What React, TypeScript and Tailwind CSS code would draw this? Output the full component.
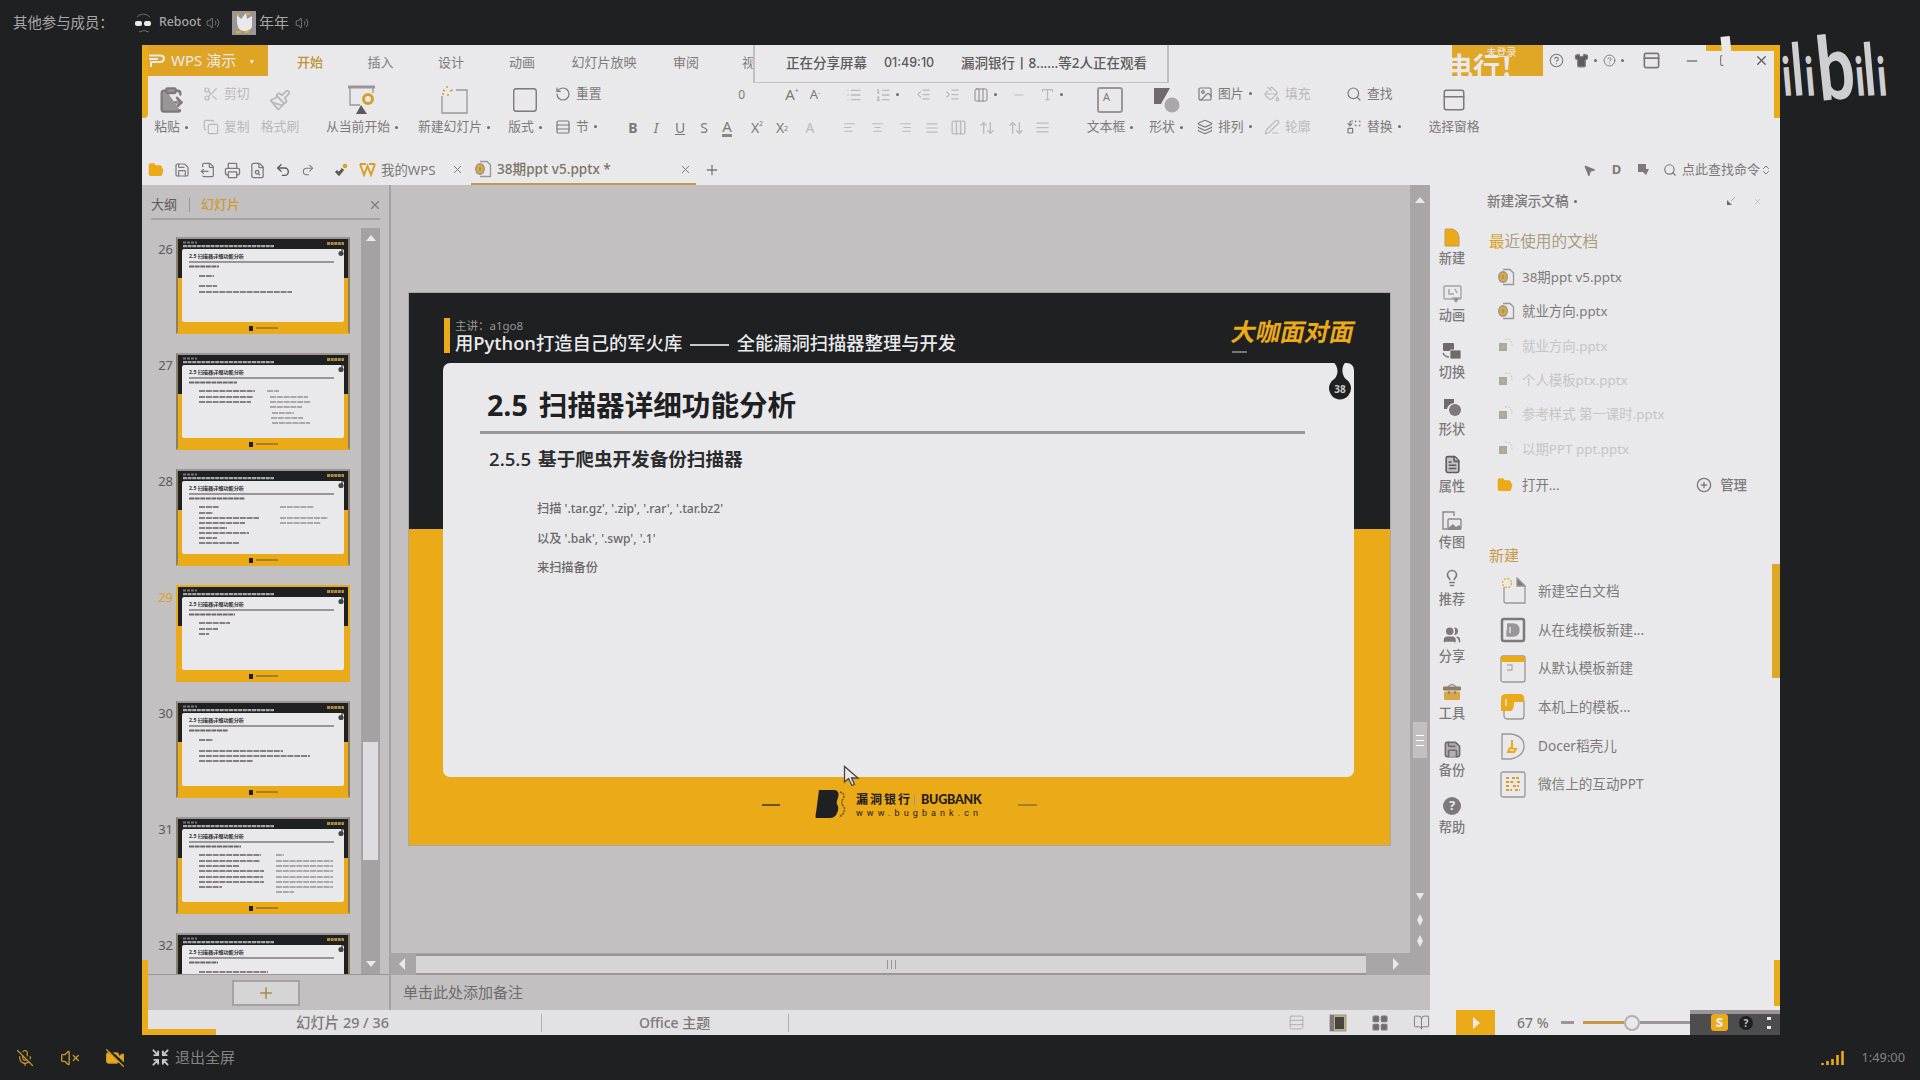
import React from "react";
import {
  ClipboardPaste, Scissors, Copy, Paintbrush, Square, RotateCcw, Rows3, List, ListOrdered,
  IndentDecrease, IndentIncrease, AlignLeft, AlignCenter, AlignRight, AlignJustify, Columns3, ArrowUpDown, Type,
  Image as ImageIcon, PaintBucket, Search, Layers, Replace, PanelTop, FolderOpen, Save, FileOutput, Printer,
  FileSearch, Undo2, Redo2, X, Plus, Minus, Shirt, HelpCircle, Square as Restore, Copy as Trans,
  FileText, Lightbulb, Users, LayoutGrid, ChevronsUpDown, MicOff, VolumeX, VideoOff,
  Volume2, Shrink, BookOpen, MousePointer2, Save as Backup, PenLine, CirclePlus,
} from "lucide-react";

const Ico = ({ i: I, s = 16, c = "" }: { i: any; s?: number; c?: string }) => (
  <I size={s} strokeWidth={1.8} className={"shrink-0 " + c} />
);

const Dot = () => <span className="ml-[5px] inline-block h-[3px] w-[3px] shrink-0 rounded-full bg-[#6f6b6c]" />;

function Big({ icon, label, className, dot = true, faint = false }: { icon: React.ReactNode; label: string; className: string; dot?: boolean; faint?: boolean }) {
  return (
    <div className={"flex shrink-0 flex-col items-center " + className + (faint ? " text-[#bab8b9]" : "")}>
      <div className="flex h-[42px] items-center pt-[6px]">{icon}</div>
      <div className="flex h-[18px] items-center whitespace-nowrap">
        {label}
        {dot && <Dot />}
      </div>
    </div>
  );
}

function Pair({ rows, className }: { rows: { icon: any; label: string; dot?: boolean; faint?: boolean }[]; className: string }) {
  return (
    <div className={"flex shrink-0 flex-col pt-px " + className}>
      {rows.map((r, k) => (
        <div key={k} className={"flex h-[33px] items-center gap-[5px] whitespace-nowrap " + (r.faint ? "text-[#bab8b9]" : "")}>
          <Ico i={r.icon} s={16} />
          <span className="flex items-center">{r.label}{r.dot && <Dot />}</span>
        </div>
      ))}
    </div>
  );
}

const Slot = ({ w, children, faint }: { w: string; children?: React.ReactNode; faint?: boolean }) => (
  <span className={"flex shrink-0 items-center justify-center " + w + (faint ? " text-[#bcbabb]" : "")}>{children}</span>
);

function BottomBrand({ small }: { small?: boolean }) {
  if (small)
    return (
      <div className="flex h-[12px] items-center justify-center gap-[3px]">
        <span className="h-[5px] w-[4px] bg-[#1e2022]" />
        <span className="h-[2px] w-[22px] bg-[#a97f26]" />
      </div>
    );
  return (
    <div className="flex h-[67px] items-start pl-[353px] pt-[12px] text-[#1e2022]">
      <span className="mt-[15px] h-[2px] w-[18px] bg-[#6b5320]" />
      <svg width="32" height="30" viewBox="0 0 32 30" className="ml-[35px]">
        <path d="M4 1 H20 Q25 2 23 9 Q21 13 22 15 Q25 20 21 26 Q19 29 15 29 H1 Q0 28 1 24Z" fill="#1e2022" />
        <path d="M25 3 Q31 5 28 10 Q25 14 29 18 Q31 24 24 28" fill="none" stroke="#6b5320" strokeWidth="1.5" strokeDasharray="2 1" />
      </svg>
      <div className="ml-[9px] mt-[3px] w-[126px]">
        <div className="flex h-[15px] items-center whitespace-nowrap text-[12px] font-bold leading-[15px]">
          <span className="tracking-[2px]">漏洞银行</span>
          <span className="ml-[2px] h-[10px] w-px bg-[#9a9697]" />
          <span className="ml-[6px] font-[Lato] text-[12.5px] font-black tracking-[-0.2px]">BUGBANK</span>
        </div>
        <div className="mt-[1px] whitespace-nowrap font-[Roboto] text-[9px] leading-[10px] tracking-[4.1px]">www.bugbank.cn</div>
      </div>
      <span className="ml-[36px] mt-[15px] h-[2px] w-[19px] bg-[#a97f26]" />
    </div>
  );
}

type Line = [number, number, number];
const thumbs: { n: number; sub: number; lines: Line[] }[] = [
  { n: 26, sub: 30, lines: [[16, 23, 15], [16, 33, 18], [16, 39, 93]] },
  { n: 27, sub: 48, lines: [[16, 22, 56], [16, 28, 54], [16, 33, 52], [84, 22, 12], [87, 28, 38], [87, 33, 41], [87, 38, 32], [89, 44, 22], [88, 49, 32], [89, 54, 38]] },
  { n: 28, sub: 56, lines: [[16, 22, 20], [16, 28, 14], [16, 33, 60], [16, 38, 46], [16, 43, 28], [16, 48, 50], [16, 53, 18], [16, 58, 40], [97, 22, 34], [97, 33, 48], [97, 38, 41]] },
  { n: 29, sub: 46, lines: [[16, 22, 31], [16, 28, 19], [16, 33, 10]] },
  { n: 30, sub: 39, lines: [[16, 23, 14], [16, 34, 84], [16, 39, 111], [16, 44, 54]] },
  { n: 31, sub: 52, lines: [[16, 22, 62], [16, 28, 61], [16, 33, 40], [16, 38, 65], [16, 44, 64], [16, 49, 65], [16, 54, 23], [93, 22, 8], [93, 28, 57], [93, 33, 57], [93, 38, 57], [93, 44, 57], [93, 49, 57], [93, 54, 57], [93, 59, 18]] },
  { n: 32, sub: 29, lines: [[16, 23, 69]] },
];

function Thumb({ n, sub, lines }: { n: number; sub: number; lines: Line[] }) {
  const on = n === 29;
  return (
    <div className="flex h-[116px] shrink-0">
      <span className={"mt-[3px] w-[33px] shrink-0 pr-[2px] text-right text-[13px] leading-[18px] " + (on ? "text-[#d9a029]" : "text-[#5d5a5b]")}>{n}</span>
      <div className={"ml-px h-[97px] w-[174px] shrink-0 border-2 " + (on ? "border-[#ebaa17]" : "border-t-[#9a9697] border-x-[#8d7f66] border-b-[#ebaa17]")}>
        <div className="h-full bg-linear-to-b from-[#1e2022] from-[42%] to-[#ebaa17] to-[42%] px-[4px]">
          <svg width="162" height="10" viewBox="0 0 162 10" className="block">
            <path d="M1 3.500H15" stroke="#77757a" strokeWidth="2" strokeDasharray="3 1" />
            <path d="M1 7.200H92" stroke="#a9a7a8" strokeWidth="2.200" strokeDasharray="4 .6" />
            <path d="M145 4.500H162" stroke="#b08c3c" strokeWidth="3" strokeDasharray="3 .6" />
          </svg>
          <div className="h-[73px] rounded-[2px] bg-[#e9e9eb]">
            <svg width="162" height="73" viewBox="0 0 162 73">
              <text x="7" y="9.300" fontSize="5" fontWeight="700" fill="#2b2c2e" textLength="55" lengthAdjust="spacingAndGlyphs">2.5 扫描器详细功能分析</text>
              <path d="M7 13H152" strokeWidth="1.800" stroke="#9a9697" />
              <g stroke="#9a9697">
                <path d={`M7 17.5h${sub}`} stroke="#6d696a" strokeWidth="2.2" strokeDasharray="5 .6" />
                {lines.map(([x, y, w], k) => (
                  <path key={k} d={`M${x + 1} ${y + 4}h${w}`} stroke={x > 80 ? "#aaa7a8" : "#858182"} strokeWidth="2" strokeDasharray="6 .8" />
                ))}
              </g>
              <path d="M160 0v4" stroke="#1e2022" />
              <circle cx="159" cy="4.5" r="2.6" fill="#454546" />
            </svg>
          </div>
          <BottomBrand small />
        </div>
      </div>
    </div>
  );
}

function Slide() {
  return (
    <div className="ml-[18px] mt-[108px] h-[552px] w-[981px] bg-linear-to-b from-[#1e2022] from-[42.8%] to-[#ebaa17] to-[42.8%] outline outline-[#9a9697]/60">
      <div className="flex h-[70px] pl-[35px] pr-[36px] pt-[25px]">
        <div className="h-[35px] w-[6px] bg-[#ebaa17]" />
        <div className="ml-[5px] whitespace-nowrap">
          <div className="h-[14px] text-[11.5px] leading-[15px] text-[#9a9697]">主讲：a1go8</div>
          <div className="font-['Open_Sans','Noto_Sans_CJK_SC',sans-serif] text-[18.3px] font-medium leading-[22px] text-[#e9e9eb]">
            用<span className="font-semibold">Python</span>打造自己的军火库 <span className="mx-[3px] inline-block h-[2px] w-[39px] align-middle bg-[#c8c7c8]" /> 全能漏洞扫描器整理与开发
          </div>
        </div>
        <div className="ml-auto">
          <div className="-skew-x-12 whitespace-nowrap text-[24.5px] font-bold leading-[28px] text-[#ebaa17]">大咖面对面</div>
          <div className="mt-[5px] h-[2px] w-[15px] bg-[#77757a]" />
        </div>
      </div>
      <div className="relative ml-[34px] h-[414px] w-[911px] rounded-[7px] bg-[#e9e9eb]">
        <svg className="absolute right-[2px] top-[-1px]" width="24" height="40" viewBox="0 0 24 40">
          <path d="M5 0H18Q14 3 14.500 10Q15 15 19 18A11 11 0 1 1 5 18Q9 15 9.500 10Q9.500 3 5 0Z" fill="#1e2022" />
          <text x="12" y="31" textAnchor="middle" fontSize="10" fontFamily="Open Sans" fontWeight="700" fill="#c8c7c8">38</text>
        </svg>
        <h1 className="whitespace-nowrap pl-[44px] pt-[21px] font-['Open_Sans','Noto_Sans_CJK_SC',sans-serif] text-[28.6px] font-bold leading-[42px] text-[#1e2022]">2.5<span className="ml-[11px]">扫描器详细功能分析</span></h1>
        <div className="ml-[37px] mt-[5px] h-[3px] w-[825px] bg-[#9a9697]" />
        <h2 className="whitespace-nowrap pl-[46px] pt-[12px] font-['Open_Sans','Noto_Sans_CJK_SC',sans-serif] text-[18.6px] font-semibold leading-[26px] text-[#2b2c2e]">2.5.5<span className="ml-[7px]">基于爬虫开发备份扫描器</span></h2>
        <div className="pl-[94px] pt-[22px] text-[12.2px] leading-[29.6px] text-[#6a6768]">
          <div className="font-medium">扫描 <span className="text-[12.100px]">'.tar.gz', '.zip', '.rar', '.tar.bz2'</span></div>
          <div className="font-medium">以及 <span className="text-[12.100px]">'.bak', '.swp', '.1'</span></div>
          <div className="font-medium">来扫描备份</div>
        </div>
        <svg className="absolute left-[400px] top-[402px]" width="18" height="24" viewBox="0 0 18 24">
          <path d="M1.500 1.500V17L5.500 13.500L9 20.500L11.500 19.500L8.500 13H15Z" fill="#e9e9eb" stroke="#454546" strokeWidth="1.3" />
        </svg>
      </div>
      <BottomBrand />
    </div>
  );
}

const NewDoc = () => (
  <svg width="16" height="19" viewBox="0 0 16 19"><path d="M1 2Q1 1 2 1H8Q15 3 15 10V18H1Z" fill="#ebaa17" stroke="#c09a50" /></svg>
);
const Animate = () => (
  <svg width="19" height="18" viewBox="0 0 19 18" fill="none" stroke="#a5a2a3" strokeWidth="1.400"><rect x="1" y="1" width="17" height="13" rx="1" /><path d="M6 4v5h5M12 4l2 4" /><path d="M10 13h6l-3 4z" fill="#7d797a" /></svg>
);
const Switch = () => (
  <svg width="20" height="18" viewBox="0 0 20 18"><rect x="1" y="1" width="11" height="8" rx="1" fill="#6f6b6c" /><rect x="8" y="8" width="11" height="9" rx="1" fill="#6f6b6c" stroke="#e9e9eb" strokeWidth=".8" /><path d="M1 11q2 4 6 4" fill="none" stroke="#7d797a" strokeWidth="1.500" /></svg>
);
const Shape = () => (
  <svg width="19" height="19" viewBox="0 0 19 19"><path d="M1 1h10v4Q5 6 4 11H1z" fill="#6f6b6c" /><circle cx="12" cy="12" r="6" fill="#7d797a" /></svg>
);
const Tools = () => (
  <svg width="20" height="18" viewBox="0 0 20 18"><path d="M6 4Q10 -1 14 4" fill="none" stroke="#9a9697" strokeWidth="1.500" /><rect x="1" y="3.500" width="18" height="4" rx="1" fill="#8d7f66" /><rect x="2" y="8.500" width="16" height="8.500" rx="1" fill="#d9a845" /><path d="M7 8v3m6-3v3" stroke="#7d797a" strokeWidth="1.500" /></svg>
);
const Send = () => (
  <svg width="20" height="20" viewBox="0 0 20 20" fill="none" stroke="#8d898a" strokeWidth="1.400"><path d="M12 5V1H1V18H6" /><rect x="6" y="8" width="13" height="10" rx="1" /><path d="M6 17l5-4 3 3 3-2 2 2v3H6z" fill="#8d898a" stroke="none" /></svg>
);
const Person = () => <Users size={18} fill="#7d797a" strokeWidth={2} />;
const Help = () => (
  <span className="flex h-[18px] w-[18px] items-center justify-center rounded-full bg-[#7d797a] text-[13px] font-bold leading-none text-[#e9e9eb]">?</span>
);
const Prop = () => <FileText size={19} fill="#c2c0c1" className="text-[#5d5a5b]" />;
const Idea = () => <Lightbulb size={18} strokeWidth={2.2} />;
const Back = () => <Backup size={19} fill="#b2afb0" className="text-[#6f6b6c]" />;

const tools: [React.FC, string][] = [
  [NewDoc, "新建"], [Animate, "动画"], [Switch, "切换"], [Shape, "形状"], [Prop, "属性"], [Send, "传图"],
  [Idea, "推荐"], [Person, "分享"], [Tools, "工具"], [Back, "备份"], [Help, "帮助"],
];

const PptIcon = ({ dim }: { dim?: boolean }) => (
  <svg width="18" height="18" viewBox="0 0 18 18" className="shrink-0">
    {dim ? (
      <><path d="M8 2h4l3 4v3" fill="none" stroke="#c2c0c1" strokeDasharray="2 1.500" /><rect x="2" y="6" width="8" height="8" fill="#aaa7a8" /><circle cx="6" cy="10" r="1.800" fill="#c9ae73" /></>
    ) : (
      <><path d="M6 1.500h7l3.500 3.500v11.500H6" fill="none" stroke="#9a9697" strokeWidth="1.3" /><ellipse cx="6" cy="9" rx="5" ry="6" fill="#9a9697" /><ellipse cx="6" cy="9" rx="2.500" ry="3.300" fill="none" stroke="#ebaa17" strokeWidth="2" /></>
    )}
  </svg>
);

const recents: [string, boolean][] = [
  ["38期ppt v5.pptx", false], ["就业方向.pptx", false], ["就业方向.pptx", true],
  ["个人模板ptx.pptx", true], ["参考样式 第一课时.pptx", true], ["以期PPT ppt.pptx", true],
];

const TemplateIcon = ({ k }: { k: number }) => (
  <svg width="26" height="28" viewBox="0 0 26 28" className="shrink-0" fill="none" stroke="#9a9697" strokeWidth="1.3">
    {k === 0 && <><path d="M4 10V24q0 2 2 2H25V9L18 2" /><path d="M17 1v8h8z" fill="#7d797a" /><circle cx="7" cy="6" r="4.500" stroke="#ebaa17" strokeDasharray="2 1.500" /></>}
    {k === 1 && <><rect x="2" y="3" width="22" height="22" rx="2" strokeWidth="2.500" stroke="#7d797a" /><path d="M7 8h6q6 0 6 6t-6 6H7v-6" fill="#9a9697" /><path d="M10 11v6" stroke="#e9e9eb" /></>}
    {k === 2 && <><rect x="1" y="1" width="24" height="26" rx="2" /><path d="M1 7V2.500Q1 1 2.500 1H23.500Q25 1 25 2.500V7Z" fill="#ebaa17" stroke="none" /><path d="M7 10h5v5H7" opacity=".7" /></>}
    {k === 3 && <><rect x="4" y="6" width="20" height="20" rx="3" /><path d="M1 18V6q0-5 5-5h14q4 0 4 4v4H14q0 8-3 9z" fill="#ebaa17" stroke="none" /><path d="M6 6v7" stroke="#e9e9eb" /></>}
    {k === 4 && <><path d="M2 2h9q13 2 13 12T11 27H2Z" /><path d="M12 8v9M10 16l-2 4h6l2-3z" stroke="#ebaa17" strokeWidth="2" /></>}
    {k === 5 && <><rect x="1" y="1" width="24" height="25" rx="2" /><path d="M6 7h3m3 0h7M6 11h8m3 0h3M6 15h4m3 0h6M6 19h6m3 0h5" stroke="#d9a029" strokeWidth="2.200" strokeDasharray="3 1.200" /></>}
  </svg>
);

const templates = ["新建空白文档", "从在线模板新建...", "从默认模板新建", "本机上的模板...", "Docer稻壳儿", "微信上的互动PPT"];

const Tri = ({ d }: { d: string }) => (
  <svg width="12" height="12" viewBox="0 0 12 12" className="shrink-0"><path d={d} fill="#e9e9eb" /></svg>
);

const Gripper = () => (
  <>
    <i className="h-[9px] w-px bg-[#9a9697]" />
    <i className="h-[9px] w-px bg-[#9a9697]" />
    <i className="h-[9px] w-px bg-[#9a9697]" />
  </>
);

export default function App() {
  return (
    <div className="relative flex h-[1080px] w-[1920px] flex-col overflow-hidden bg-[#1e2022] font-['Noto_Sans','Noto_Sans_CJK_SC',sans-serif] text-[13px] text-[#7d797a]">
      {/* participants */}
      <header className="flex h-[45px] shrink-0 items-center whitespace-nowrap pl-[13px] text-[14.4px] text-[#a9a6a7]">
        <span className="w-[122px]">其他参与成员：</span>
        <svg width="17" height="22" viewBox="0 0 17 22">
          <path d="M2 5Q8 -1 15 5M4 20Q9 17 14 20" stroke="#6f6d6e" fill="none" />
          <rect x="0" y="9" width="7" height="5" rx="2" fill="#e9e9eb" /><rect x="9" y="9" width="7" height="5" rx="2" fill="#e9e9eb" />
        </svg>
        <span className="ml-[7px] w-[47px] text-[12.3px] font-medium">Reboot</span>
        <Ico i={Volume2} s={14} c="text-[#6f6d6e]" />
        <span className="ml-[12px] flex h-[24px] w-[24px] items-center justify-center bg-[#9a9697]">
          <svg width="22" height="22" viewBox="0 0 22 22"><path d="M4 3l4 4 5-6 1 6 5-3v11q-2 4-8 4t-7-8z" fill="#e9e9eb" /><path d="M4 3h2M14 2h3M3 20h5m3 0h5" stroke="#ebaa17" strokeWidth="2" /></svg>
        </span>
        <span className="ml-[3px] w-[36px] text-[15px]">年年</span>
        <Ico i={Volume2} s={14} c="text-[#6f6d6e]" />
      </header>

      {/* shared window */}
      <main className="relative ml-[142px] flex h-[990px] w-[1638px] shrink-0 flex-col bg-[#e9e9eb]">
        <div className="flex h-[31px] shrink-0 whitespace-nowrap">
          <div className="flex w-[126px] items-center bg-[#dfa424] pl-[7px] text-[#e9e9eb]">
            <svg width="16" height="14" viewBox="0 0 16 14"><path d="M0 1.500H12Q15 2 15 4.500T12 8H2V13M0 5H9" stroke="#e9e9eb" strokeWidth="2" fill="none" /></svg>
            <span className="ml-[6px] text-[15px]">WPS 演示</span>
            <span className="ml-[14px] text-[8px]">▾</span>
          </div>
          <div className="flex items-center pt-[5px]">
            <span className="w-[84px] text-center font-medium text-[#c09130]">开始</span>
            <span className="w-[57px] text-center">插入</span>
            <span className="w-[84px] text-center">设计</span>
            <span className="w-[58px] text-center">动画</span>
            <span className="w-[106px] text-center">幻灯片放映</span>
            <span className="w-[58px] text-center">审阅</span>
            <span className="w-[38px] pl-[27px]">视</span>
          </div>
          <div className="relative z-10 flex h-[38px] w-[416px] items-center border-x-2 border-b border-[#c2c0c1] bg-[#e9e9eb] pl-[31px] text-[13.5px] font-medium text-[#5d5a5b]">
            <span className="w-[98px]">正在分享屏幕</span>
            <span className="w-[77px] font-[Inter] text-[12.5px]">01:49:10</span>
            <span>漏洞银行丨8......等2人正在观看</span>
          </div>
          <div className="ml-[283px] flex w-[91px] items-start justify-center bg-[#e0a626] pl-[8px] pt-px text-[10px] leading-[12px] text-[#e9e9eb]">未登录</div>
          <div className="flex items-center">
            <Slot w="w-[27px]"><Ico i={HelpCircle} s={15} /></Slot>
            <Slot w="w-[30px]"><Shirt size={15} fill="#5d5a5b" /><Dot /></Slot>
            <Slot w="w-[26px]"><Ico i={HelpCircle} s={13} /><Dot /></Slot>
            <Slot w="w-[50px]"><PanelTop size={19} strokeWidth={2.2} /></Slot>
            <Slot w="w-[32px]"><Minus size={16} /></Slot>
            <Slot w="w-[34px]"><Restore size={13} /></Slot>
            <Slot w="w-[38px]"><X size={15} className="text-[#5d5a5b]" /></Slot>
          </div>
        </div>

        {/* ribbon */}
        <div className="flex h-[79px] shrink-0 overflow-hidden text-[12.8px]">
          <Big className="ml-[9px] w-[40px]" icon={<ClipboardPaste size={28} fill="#9a9697" />} label="粘贴" />
          <Pair className="ml-[12px] w-[52px]" rows={[{ icon: Scissors, label: "剪切", faint: true }, { icon: Copy, label: "复制", faint: true }]} />
          <Big className="ml-[5px] w-[40px]" faint dot={false} icon={<Paintbrush size={22} />} label="格式刷" />
          <Big
            className="ml-[23px] w-[78px]"
            icon={
              <svg width="28" height="30" viewBox="0 0 28 30"><path d="M0 2H27" stroke="#9a9697" strokeWidth="3" /><path d="M2 3V20H12M25 3V8" fill="none" stroke="#9a9697" strokeWidth="1.300" /><circle cx="20" cy="14" r="4.500" fill="none" stroke="#d9a029" strokeWidth="3" /><path d="M13 20L19 29H8Z" fill="#5d5a5b" /></svg>
            }
            label="从当前开始"
          />
          <Big
            className="ml-[13px] w-[80px]"
            icon={
              <svg width="28" height="30" viewBox="0 0 28 30" fill="none"><path d="M2 11V28H27V5H16" stroke="#9a9697" strokeWidth="1.300" /><path d="M7 1v2M3 5l2 1M10 6l3-1M8 9v2M2 9h2" stroke="#d9a029" strokeWidth="1.500" /></svg>
            }
            label="新建幻灯片"
          />
          <Big className="ml-[10px] w-[42px]" icon={<Square size={30} strokeWidth={1.1} />} label="版式" />
          <Pair className="ml-[9px] w-[60px]" rows={[{ icon: RotateCcw, label: "重置" }, { icon: Rows3, label: "节", dot: true }]} />
          <div className="flex flex-col text-[15px]">
            <div className="flex h-[37px] items-center">
              <Slot w="w-[130px]"><span className="ml-auto text-[12px]">0</span></Slot>
              <Slot w="ml-[35px] w-[24px]">A<sup className="text-[7px]">+</sup></Slot>
              <Slot w="w-[22px]"><span className="text-[13px]">A<sup className="text-[7px]">-</sup></span></Slot>
              <Slot w="ml-[14px] w-[28px]" faint><List size={16} /></Slot>
              <Slot w="w-[38px]" faint><ListOrdered size={16} /><Dot /></Slot>
              <Slot w="w-[35px]" faint><IndentDecrease size={15} /></Slot>
              <Slot w="w-[22px]" faint><IndentIncrease size={15} /></Slot>
              <Slot w="w-[44px]"><Columns3 size={16} strokeWidth={1.3} /><Dot /></Slot>
              <Slot w="w-[24px]" faint><Minus size={14} /></Slot>
              <Slot w="w-[40px]" faint><Type size={15} /><Dot /></Slot>
            </div>
            <div className="flex h-[29px] items-center text-[14px]">
              <Slot w="w-[36px]"><b>B</b></Slot>
              <Slot w="w-[10px]"><i>I</i></Slot>
              <Slot w="ml-[7px] w-[24px]"><u>U</u></Slot>
              <Slot w="w-[24px]">S</Slot>
              <Slot w="w-[22px]"><span className="border-b-[3px] border-[#8a8687] text-[15px] leading-[15px]">A</span></Slot>
              <Slot w="ml-[7px] w-[24px]">X<sup className="text-[7px]">2</sup></Slot>
              <Slot w="w-[26px]">X<sub className="text-[7px]">2</sub></Slot>
              <Slot w="w-[30px]" faint>A</Slot>
              <Slot w="ml-[10px] w-[28px]" faint><AlignLeft size={13} /></Slot>
              <Slot w="w-[28px]" faint><AlignCenter size={13} /></Slot>
              <Slot w="w-[28px]" faint><AlignRight size={13} /></Slot>
              <Slot w="w-[26px]" faint><AlignJustify size={14} /></Slot>
              <Slot w="w-[26px]" faint><Columns3 size={17} /></Slot>
              <Slot w="w-[32px]" faint><ArrowUpDown size={16} /></Slot>
              <Slot w="w-[26px]" faint><ArrowUpDown size={16} /></Slot>
              <Slot w="w-[26px]" faint><AlignJustify size={15} /></Slot>
            </div>
          </div>
          <div className="flex grow pl-[7px]">
            <Big className="w-[64px]" icon={<div className="flex h-[26px] w-[26px] items-start rounded-[3px] border-2 border-[#9a9697] pl-[4px] text-[11px] leading-[16px]">A</div>} label="文本框" />
            <Big className="ml-[2px] w-[44px]" icon={<svg width="27" height="27" viewBox="0 0 27 27"><path d="M1 1h16L8 17H1z" fill="#6f6b6c" /><circle cx="19" cy="18" r="7.500" fill="#aaa7a8" /></svg>} label="形状" />
            <Pair className="ml-[9px] w-[67px]" rows={[{ icon: ImageIcon, label: "图片", dot: true }, { icon: Layers, label: "排列", dot: true }]} />
            <Pair className="w-[82px]" rows={[{ icon: PaintBucket, label: "填充", faint: true }, { icon: PenLine, label: "轮廓", faint: true }]} />
            <Pair className="w-[71px]" rows={[{ icon: Search, label: "查找" }, { icon: Replace, label: "替换", dot: true }]} />
            <Big className="ml-[5px] w-[64px]" dot={false} icon={<PanelTop size={26} strokeWidth={1.4} />} label="选择窗格" />
          </div>
        </div>

        {/* quick access and document tabs */}
        <div className="flex h-[30px] shrink-0 items-center whitespace-nowrap">
          <Slot w="w-[27px]"><FolderOpen size={16} fill="#ebaa17" className="text-[#ebaa17]" /></Slot>
          <Slot w="w-[26px]"><Ico i={Save} /></Slot>
          <Slot w="w-[25px]"><Ico i={FileOutput} /></Slot>
          <Slot w="w-[25px]"><Ico i={Printer} s={17} /></Slot>
          <Slot w="w-[25px]"><Ico i={FileSearch} s={17} /></Slot>
          <Slot w="w-[25px]"><Undo2 size={16} className="text-[#5d5a5b]" /></Slot>
          <Slot w="w-[25px]"><Ico i={Redo2} s={14} /></Slot>
          <Slot w="w-[36px]">
            <svg width="14" height="14" viewBox="0 0 14 14" className="ml-[6px]"><path d="M2 8l3 3 4-5" fill="none" stroke="#5d5a5b" strokeWidth="3" /><circle cx="11" cy="3" r="2.300" fill="#d9a029" /></svg>
          </Slot>
          <span className="ml-[3px] flex items-center text-[13.4px]">
            <svg width="17" height="14" viewBox="0 0 17 14"><path d="M1 1L5 12L8.500 3L12 12L16 1M1 1H7M10 1h6" fill="none" stroke="#d9a029" strokeWidth="2" /></svg>
            <span className="ml-[5px] w-[70px]">我的WPS</span>
            <Ico i={X} s={13} />
          </span>
          <span className="ml-[7px] flex h-[30px] w-[225px] items-center border-b-2 border-[#c09a50] pl-[3px] text-[13.6px] font-medium">
            <PptIcon />
            <span className="ml-[5px] w-[182px] text-[#7b7368]">38期ppt v5.pptx *</span>
            <Ico i={X} s={13} />
          </span>
          <Plus size={16} className="ml-[8px]" />
          <span className="ml-auto flex items-center gap-[13px] pr-[8px]">
            <MousePointer2 size={13} fill="#7d797a" />
            <span className="w-[15px] text-center font-bold">D</span>
            <svg width="13" height="14" viewBox="0 0 13 14"><path d="M1 1h8v5h3l-3 6-3-3H1z" fill="#7d797a" /></svg>
            <span className="flex items-center gap-[5px]"><Search size={14} />点此查找命令<ChevronsUpDown size={12} className="-ml-[5px]" /></span>
          </span>
        </div>

        <div className="flex h-[850px] shrink-0">
          <div className="flex w-[1288px] shrink-0 flex-col">
            <div className="flex h-[825px] bg-[#c2c0c1]">
              {/* slide list */}
              <section className="flex w-[249px] shrink-0 flex-col border-r-2 border-[#a5a2a3]">
                <div className="mx-[9px] flex h-[35px] shrink-0 items-center border-b-2 border-[#a5a2a3] pt-[6px]">
                  <span className="w-[38px] text-[#5d5a5b]">大纲</span>
                  <span className="h-[14px] w-px bg-[#9a9697]" />
                  <span className="ml-[11px] font-medium text-[#cf9a30]">幻灯片</span>
                  <X size={14} className="ml-auto mr-[-2px]" />
                </div>
                <div className="flex h-[755px] border-b border-[#9a9697]">
                  <div className="h-full w-[219px] overflow-hidden pt-[17px]">
                    {thumbs.map((t) => <Thumb key={t.n} {...t} />)}
                  </div>
                  <div className="mt-[8px] flex w-[19px] flex-col items-center bg-[#a5a2a3] py-[4px]">
                    <Tri d="M1 9L6 3L11 9Z" />
                    <span className="mt-[498px] h-[118px] w-[15px] shrink-0 bg-[#dddcde]" />
                    <span className="grow" />
                    <Tri d="M1 3L6 9L11 3Z" />
                  </div>
                </div>
                <div className="flex h-[35px] items-center pl-[90px]">
                  <span className="flex h-[26px] w-[68px] items-center justify-center border-2 border-[#a5a2a3] bg-[#d6d5d6]"><Plus size={18} className="text-[#a98a48]" /></span>
                </div>
              </section>

              {/* canvas */}
              <section className="flex w-[1039px] flex-col">
                <div className="flex h-[768px]">
                  <div className="w-[1019px]"><Slide /></div>
                  <div className="flex w-[20px] flex-col items-center bg-[#a9a6a7] pt-[8px]">
                    <Tri d="M1 10L6 4L11 10Z" />
                    <span className="mt-[517px] flex h-[36px] w-[14px] flex-col justify-center gap-[4px] bg-[#c2c0c1] px-[3px]"><i className="h-px bg-white" /><i className="h-px bg-white" /><i className="h-px bg-white" /></span>
                    <span className="grow" />
                    <Tri d="M2 2L6 9L10 2Z" />
                    <span className="mt-[11px] flex"><Tri d="M6 0L9 6L6 12L3 6Z" /></span>
                    <span className="mb-[6px] mt-[9px] flex"><Tri d="M6 0L9 6L6 12L3 6Z" /></span>
                  </div>
                </div>
                <div className="flex h-[22px] items-center bg-[#a9a6a7] pl-[5px]">
                  <Tri d="M9 0L3 6L9 12Z" />
                  <span className="ml-[8px] flex h-[21px] w-[950px] items-center justify-center gap-[3px] border-y-2 border-[#9a9697] bg-[#d6d5d6]"><Gripper /></span>
                  <span className="ml-[24px] flex"><Tri d="M3 0L9 6L3 12Z" /></span>
                </div>
                <div className="flex h-[35px] items-center pl-[12px] text-[15px] text-[#6f6b6c]">单击此处添加备注</div>
              </section>
            </div>
            {/* status bar */}
            <div className="flex h-[25px] items-center whitespace-nowrap bg-[#e2e1e3] text-[14px] font-medium">
              <span className="w-[399px] pl-[154px] text-[14.4px]">幻灯片 29 / 36</span>
              <span className="h-[18px] w-px bg-[#b2afb0]" />
              <span className="w-[246px] pl-[97px]">Office 主题</span>
              <span className="h-[18px] w-px bg-[#b2afb0]" />
              <span className="ml-auto flex items-center gap-[24px] pl-[2px]">
                <Rows3 size={17} strokeWidth={1.2} className="text-[#aaa7a8]" />
                <svg width="18" height="18" viewBox="0 0 18 18"><rect x="1" y="1" width="16" height="16" fill="#c9ae73" stroke="#9a9697" /><rect x="1" y="1" width="4" height="16" fill="#7d797a" /><rect x="6" y="3" width="9" height="12" fill="#454546" /></svg>
                <LayoutGrid size={18} fill="#6f6b6c" />
                <BookOpen size={17} strokeWidth={1.3} />
              </span>
            </div>
          </div>

          <div className="flex grow flex-col">
            <div className="flex h-[825px]">
              <nav className="flex w-[44px] shrink-0 flex-col items-center pt-[41px]">
                {tools.map(([I, t]) => (
                  <div key={t} className="flex h-[56.9px] shrink-0 flex-col items-center">
                    <div className="flex h-[22px] items-center"><I /></div>
                    <span className="text-[13.2px] font-medium leading-[20px]">{t}</span>
                  </div>
                ))}
              </nav>
              <aside className="flex w-[306px] flex-col whitespace-nowrap">
                <div className="flex h-[32px] items-center pl-[13px] text-[13.6px]">
                  <span className="font-medium">新建演示文稿</span><Dot />
                  <svg width="10" height="10" viewBox="0 0 10 10" className="ml-auto"><path d="M1 9V4l5 5z" fill="#6f6b6c" /><path d="M5 5l4-4" stroke="#aaa7a8" /></svg>
                  <X size={9} className="ml-[17px] mr-[18px] text-[#bcbabb]" />
                </div>
                <div className="mt-[13px] flex h-[24px] items-center pl-[15px] text-[15.6px] text-[#ab9c80]"><span className="text-[#d9a029]">最</span>近使用的文档</div>
                <div className="mt-[6px] flex flex-col">
                  {recents.map(([t, dim], k) => (
                    <div key={k} className={"flex h-[34.3px] items-center gap-[7px] pl-[23px] text-[13.4px] " + (dim ? "text-[#c6c4c5]" : "")}>
                      <PptIcon dim={dim} />{t}
                    </div>
                  ))}
                </div>
                <div className="mt-[1px] flex h-[36px] items-center pl-[23px] text-[13.4px]">
                  <FolderOpen size={16} fill="#ebaa17" className="text-[#ebaa17]" /><span className="ml-[9px]">打开...</span>
                  <CirclePlus size={16} className="ml-auto" /><span className="ml-[8px] mr-[33px] font-medium">管理</span>
                </div>
                <div className="mt-[41px] flex h-[22px] items-center pl-[15px] text-[15px] text-[#c79a48]">新建</div>
                <div className="mt-[6px] flex flex-col">
                  {templates.map((t, k) => (
                    <div key={k} className="flex h-[38.7px] items-center gap-[12px] pl-[26px] text-[13.6px]"><TemplateIcon k={k} />{t}</div>
                  ))}
                </div>
              </aside>
            </div>
            <div className="flex h-[25px] items-center">
              <span className="ml-[26px] flex h-[25px] w-[39px] items-center justify-center bg-[#ebaa17]"><Tri d="M3 0L10 6L3 12Z" /></span>
              <span className="ml-[22px] w-[44px] whitespace-nowrap text-[14px] font-medium">67 %</span>
              <span className="h-[3px] w-[13px] bg-[#9a9697]" />
              <span className="ml-[9px] h-[3px] w-[41px] bg-[#c79a48]" />
              <span className="h-[16px] w-[16px] rounded-full border-2 border-[#b2afb0] bg-[#e9e9eb]" />
              <span className="h-[3px] w-[50px] bg-[#9a9697]" />
              <span className="flex h-[25px] grow items-center border-t-4 border-[#9a9697] bg-[#4d4c4e] pb-[4px] pl-[21px]">
                <span className="flex h-[17px] w-[17px] items-center justify-center rounded-[3px] bg-[#ebaa17] text-[13px] font-black leading-none text-[#e9e9eb]">S</span>
                <span className="ml-[11px] flex h-[14px] w-[14px] items-center justify-center rounded-full bg-[#1e2022] text-[10px] font-bold leading-none text-[#c8c7c8]">?</span>
                <span className="ml-[14px] flex flex-col gap-[6px]"><i className="h-[3px] w-[4px] bg-[#e9e9eb]" /><i className="h-[3px] w-[4px] bg-[#e9e9eb]" /></span>
              </span>
            </div>
          </div>
        </div>

        {/* share frame brackets */}
        <span className="absolute left-0 top-0 h-[73px] w-[6px] rounded-br-[4px] bg-[#ebaa17]" />
        <span className="absolute right-0 top-0 h-[6px] w-[74px] bg-[#ebaa17]" />
        <span className="absolute right-0 top-0 h-[73px] w-[6px] bg-[#ebaa17]" />
        <span className="absolute bottom-0 left-0 h-[75px] w-[6px] bg-[#ebaa17]" />
        <span className="absolute bottom-0 left-0 h-[6px] w-[74px] bg-[#ebaa17]" />
        <span className="absolute bottom-[29px] right-0 h-[46px] w-[6px] bg-[#ebaa17]" />
        <span className="absolute right-0 top-[519px] h-[114px] w-[8px] bg-[#e0a626]" />
      </main>

      {/* meeting controls */}
      <footer className="flex h-[45px] items-center whitespace-nowrap pl-[15px] text-[15px] text-[#858384]">
        <Slot w="w-[19px]"><MicOff size={18} strokeWidth={1.6} className="text-[#c79a2e]" /></Slot>
        <Slot w="ml-[25px] w-[22px]"><VolumeX size={20} strokeWidth={1.6} className="text-[#c79a2e]" /></Slot>
        <Slot w="ml-[23px] w-[22px]"><VideoOff size={20} strokeWidth={1.6} fill="#ebaa17" className="text-[#c79a2e]" /></Slot>
        <Shrink size={19} strokeWidth={2.4} className="ml-[25px] text-[#c8c7c8]" />
        <span className="ml-[5px]">退出全屏</span>
        <svg width="24" height="16" viewBox="0 0 24 16" className="ml-auto"><path d="M1.500 13v2M6.500 11v4M11.500 9v6M16.500 5v10M21.500 1v14" stroke="#ebaa17" strokeWidth="2.600" /></svg>
        <span className="ml-[17px] mr-[15px] text-[12.8px]">1:49:00</span>
      </footer>

      {/* stream watermark */}
      <div className="pointer-events-none absolute left-[1446px] top-[36px] z-20 flex h-[84px] w-[460px] items-start whitespace-nowrap text-[#e9e9eb]">
        <span className="pt-[9px] text-[27px] font-bold leading-[44px]">电行！</span>
        <svg width="190" height="84" viewBox="0 0 190 84" className="ml-auto mr-[16px] -mt-[6px] overflow-visible" fontFamily="Roboto" fontWeight="800" fill="#cfced0">
          <text transform="translate(24 70) rotate(-6) scale(.72 1)" fontSize="84" fill="#e9e9eb">b</text>
          <text transform="translate(84 66) rotate(-5) scale(.62 1)" fontSize="54">i</text>
          <text transform="translate(94 66) rotate(-5) scale(.56 1)" fontSize="72">l</text>
          <text transform="translate(107 66) rotate(-5) scale(.62 1)" fontSize="54">i</text>
          <text transform="translate(120 71) rotate(-6) scale(.76 1)" fontSize="88" fontWeight="600">b</text>
          <text transform="translate(157 66) rotate(-5) scale(.62 1)" fontSize="54">i</text>
          <text transform="translate(166 66) rotate(-5) scale(.56 1)" fontSize="72">l</text>
          <text transform="translate(179 66) rotate(-5) scale(.62 1)" fontSize="54">i</text>
        </svg>
      </div>
    </div>
  );
}
